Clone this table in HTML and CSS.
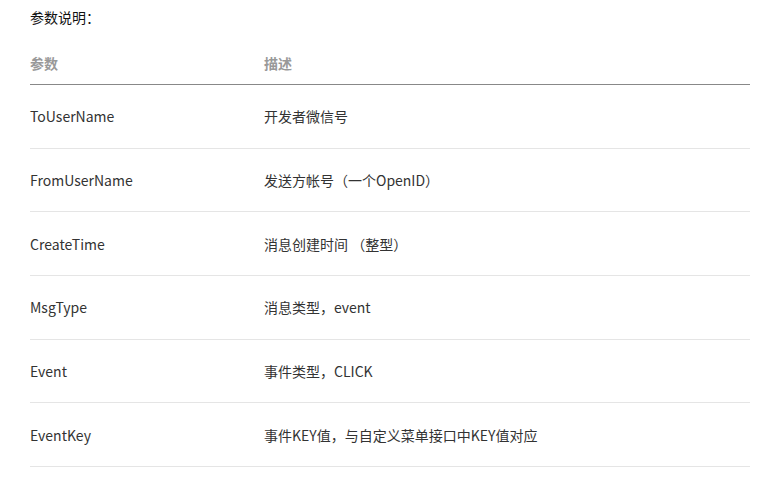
FILE: index.html
```html
<!DOCTYPE html>
<html lang="zh">
<head>
<meta charset="utf-8">
<link rel="stylesheet" href="styles.css">
</head>
<body>
<div class="doc">
  <p class="title">参数说明：</p>
  <table class="params">
    <thead>
      <tr><th class="col-name">参数</th><th>描述</th></tr>
    </thead>
    <tbody>
      <tr><td>ToUserName</td><td>开发者微信号</td></tr>
      <tr><td>FromUserName</td><td>发送方帐号（一个OpenID）</td></tr>
      <tr><td>CreateTime</td><td>消息创建时间 （整型）</td></tr>
      <tr><td>MsgType</td><td>消息类型，event</td></tr>
      <tr><td>Event</td><td>事件类型，CLICK</td></tr>
      <tr><td>EventKey</td><td>事件KEY值，与自定义菜单接口中KEY值对应</td></tr>
    </tbody>
  </table>
</div>
</body>
</html>
```
FILE: styles.css
```css
html, body {
  margin: 0;
  padding: 0;
  background: #fff;
}
.doc {
  padding: 0 27px 0 30px;
  font-family: "Noto Sans CJK SC", "Noto Sans", sans-serif;
  font-size: 14px;
  color: #333;
}
.title {
  margin: 0;
  padding-top: 6px;
  line-height: 22px;
  color: #111;
}
.params {
  width: 720px;
  border-collapse: collapse;
  margin-top: 25px;
}
.params th {
  text-align: left;
  font-weight: 600;
  color: #999;
  padding: 0 0 11px;
  line-height: 20px;
  border-bottom: 1px solid #888;
}
.params .col-name {
  width: 234px;
}
.params td {
  padding: 21.35px 0;
  line-height: 20px;
  border-bottom: 1px solid #e5e5e5;
  vertical-align: middle;
}
```
